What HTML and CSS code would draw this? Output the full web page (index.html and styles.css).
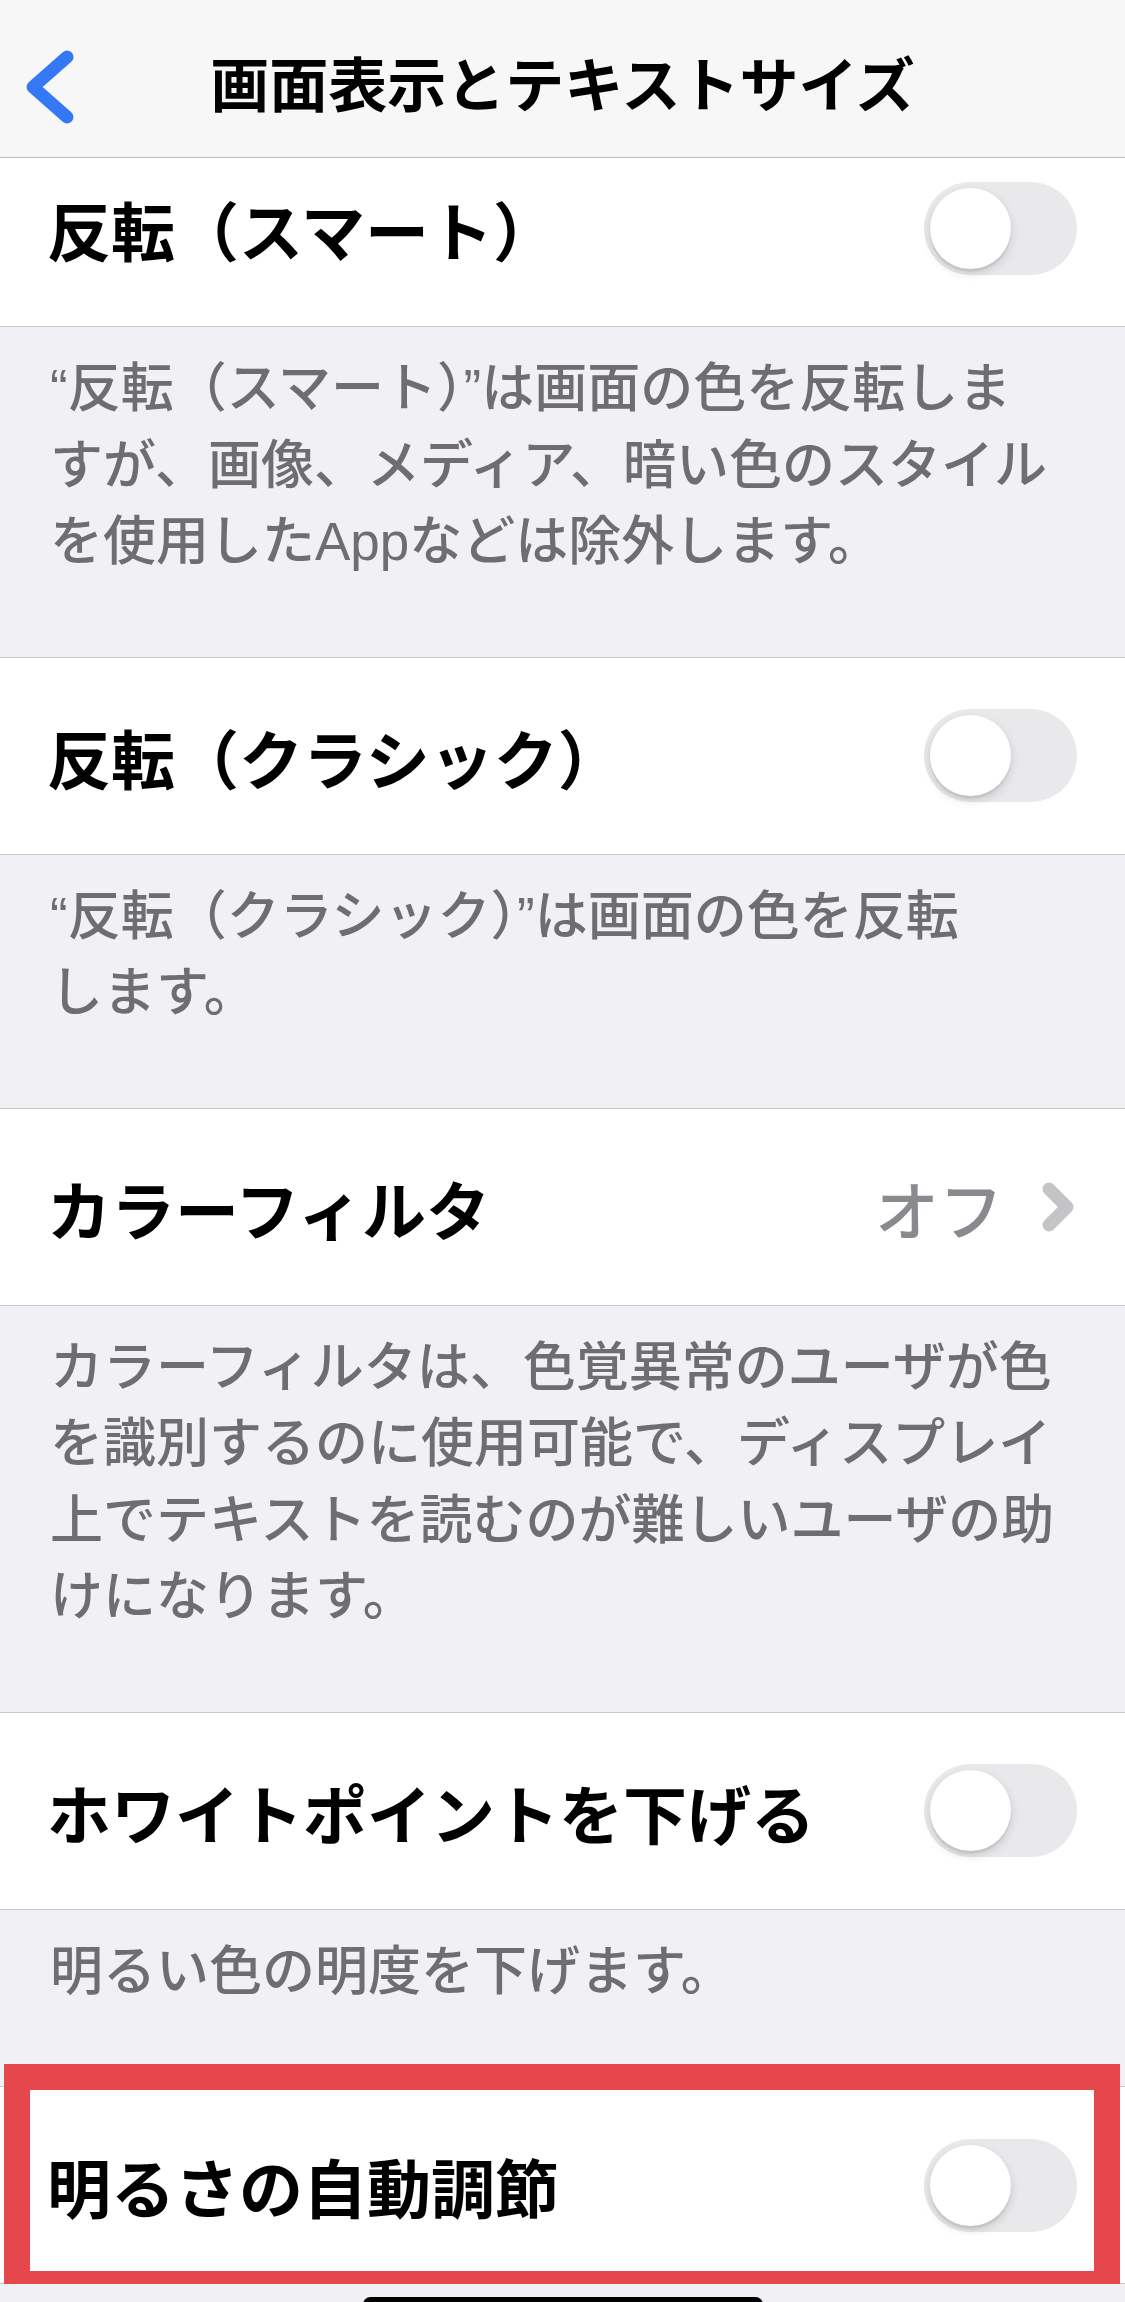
FILE: index.html
```html
<!DOCTYPE html>
<html lang="ja">
<head>
    <meta charset="UTF-8">
    <meta name="viewport" content="width=device-width, initial-scale=1.0">
    <title>画面表示とテキストサイズ</title>
    <link rel="stylesheet" href="styles.css">
</head>
<body>
    <header class="nav">
        <a class="back" href="#" aria-label="戻る">
            <svg viewBox="0 0 60 90" width="60" height="90"><polyline points="47,15 13,45 47,75"/></svg>
        </a>
        <h1 class="nav-title">画面表示とテキストサイズ</h1>
        <span></span>
    </header>

    <main class="list">
        <div class="row row-first">
            <span class="label">反転（スマート）</span>
            <span class="switch" role="switch" aria-checked="false"><span class="knob"></span></span>
        </div>
        <p class="note">“反転（スマート）”は画面の色を反転しま<br>すが、画像、メディア、暗い色のスタイル<br>を使用したAppなどは除外します。</p>

        <div class="row">
            <span class="label">反転（クラシック）</span>
            <span class="switch" role="switch" aria-checked="false"><span class="knob"></span></span>
        </div>
        <p class="note">“反転（クラシック）”は画面の色を反転<br>します。</p>

        <div class="row">
            <span class="label">カラーフィルタ</span>
            <span class="detail">
                <span class="value">オフ</span>
                <svg class="chevron" viewBox="0 0 40 60" width="40" height="60"><polyline points="12,12 30,30 12,48"/></svg>
            </span>
        </div>
        <p class="note">カラーフィルタは、色覚異常のユーザが色<br>を識別するのに使用可能で、ディスプレイ<br>上でテキストを読むのが難しいユーザの助<br>けになります。</p>

        <div class="row">
            <span class="label">ホワイトポイントを下げる</span>
            <span class="switch" role="switch" aria-checked="false"><span class="knob"></span></span>
        </div>
        <p class="note">明るい色の明度を下げます。</p>

        <div class="row row-marked">
            <span class="label">明るさの自動調節</span>
            <span class="switch" role="switch" aria-checked="false"><span class="knob"></span></span>
            <span class="mark"></span>
        </div>
    </main>

    <div class="home-bar"></div>
</body>
</html>
```

FILE: styles.css
```css
body {
    margin: 0;
    background-color: #f0f0f5;
    font-family: "Liberation Sans", "Noto Sans CJK JP", sans-serif;
    overflow: hidden;
}

/* navigation bar */
.nav {
    position: relative;
    z-index: 1;
    height: 140px;
    padding-top: 17px;
    display: grid;
    grid-template-columns: 1fr auto 1fr;
    align-items: center;
    background-color: #f7f7f8;
    border-bottom: 1px solid #bdbdc0;
}
.back svg {
    display: block;
    margin-left: 20px;
    fill: none;
    stroke: #3478f6;
    stroke-width: 13;
    stroke-linecap: round;
    stroke-linejoin: round;
}
.nav-title {
    margin: 0;
    font-size: 59px;
    font-weight: 700;
    line-height: 1;
    color: #000;
}

/* table rows */
.row {
    display: flex;
    align-items: center;
    justify-content: space-between;
    height: 197px;
    box-sizing: border-box;
    padding: 0 48px 0 47px;
    background-color: #fff;
    border-bottom: 1px solid #c8c7cc;
}
.row-first {
    margin-top: -28px; /* scrolled under the nav bar */
}
.label {
    font-size: 64px;
    font-weight: 700;
    color: #000;
    white-space: nowrap;
}
.detail {
    display: flex;
    align-items: center;
}
.value {
    font-size: 64px;
    font-weight: 500;
    color: #8a8a8e;
    margin-right: 34px;
}
.chevron {
    display: block;
    fill: none;
    stroke: #c4c4c7;
    stroke-width: 13;
    stroke-linecap: round;
    stroke-linejoin: round;
}

/* footer text under each row */
.note {
    margin: 0;
    padding: 24px 48px 76px 50px;
    font-size: 53px;
    font-weight: 500;
    line-height: 76.5px;
    color: #6d6d72;
    border-bottom: 1px solid #c8c7cc;
}

/* off switch */
.switch {
    flex-shrink: 0;
    width: 153px;
    height: 93px;
    box-sizing: border-box;
    padding: 6px;
    border-radius: 47px;
    background-color: #e9e9eb;
}
.knob {
    display: block;
    width: 81px;
    height: 81px;
    border-radius: 50%;
    background-color: #fff;
    box-shadow: 0 4px 10px rgba(0, 0, 0, 0.15), 0 3px 1px rgba(0, 0, 0, 0.06);
}

/* highlight frame */
.row-marked {
    position: relative;
}
.mark {
    position: absolute;
    top: -23px;
    left: 4px;
    width: 1116px;
    height: 233px;
    box-sizing: border-box;
    border: 26px solid #e6474d;
}

.home-bar {
    position: fixed;
    left: 0;
    right: 0;
    bottom: -10px;
    margin: 0 auto;
    width: 400px;
    height: 15px;
    border-radius: 8px;
    background-color: #000;
}
```
